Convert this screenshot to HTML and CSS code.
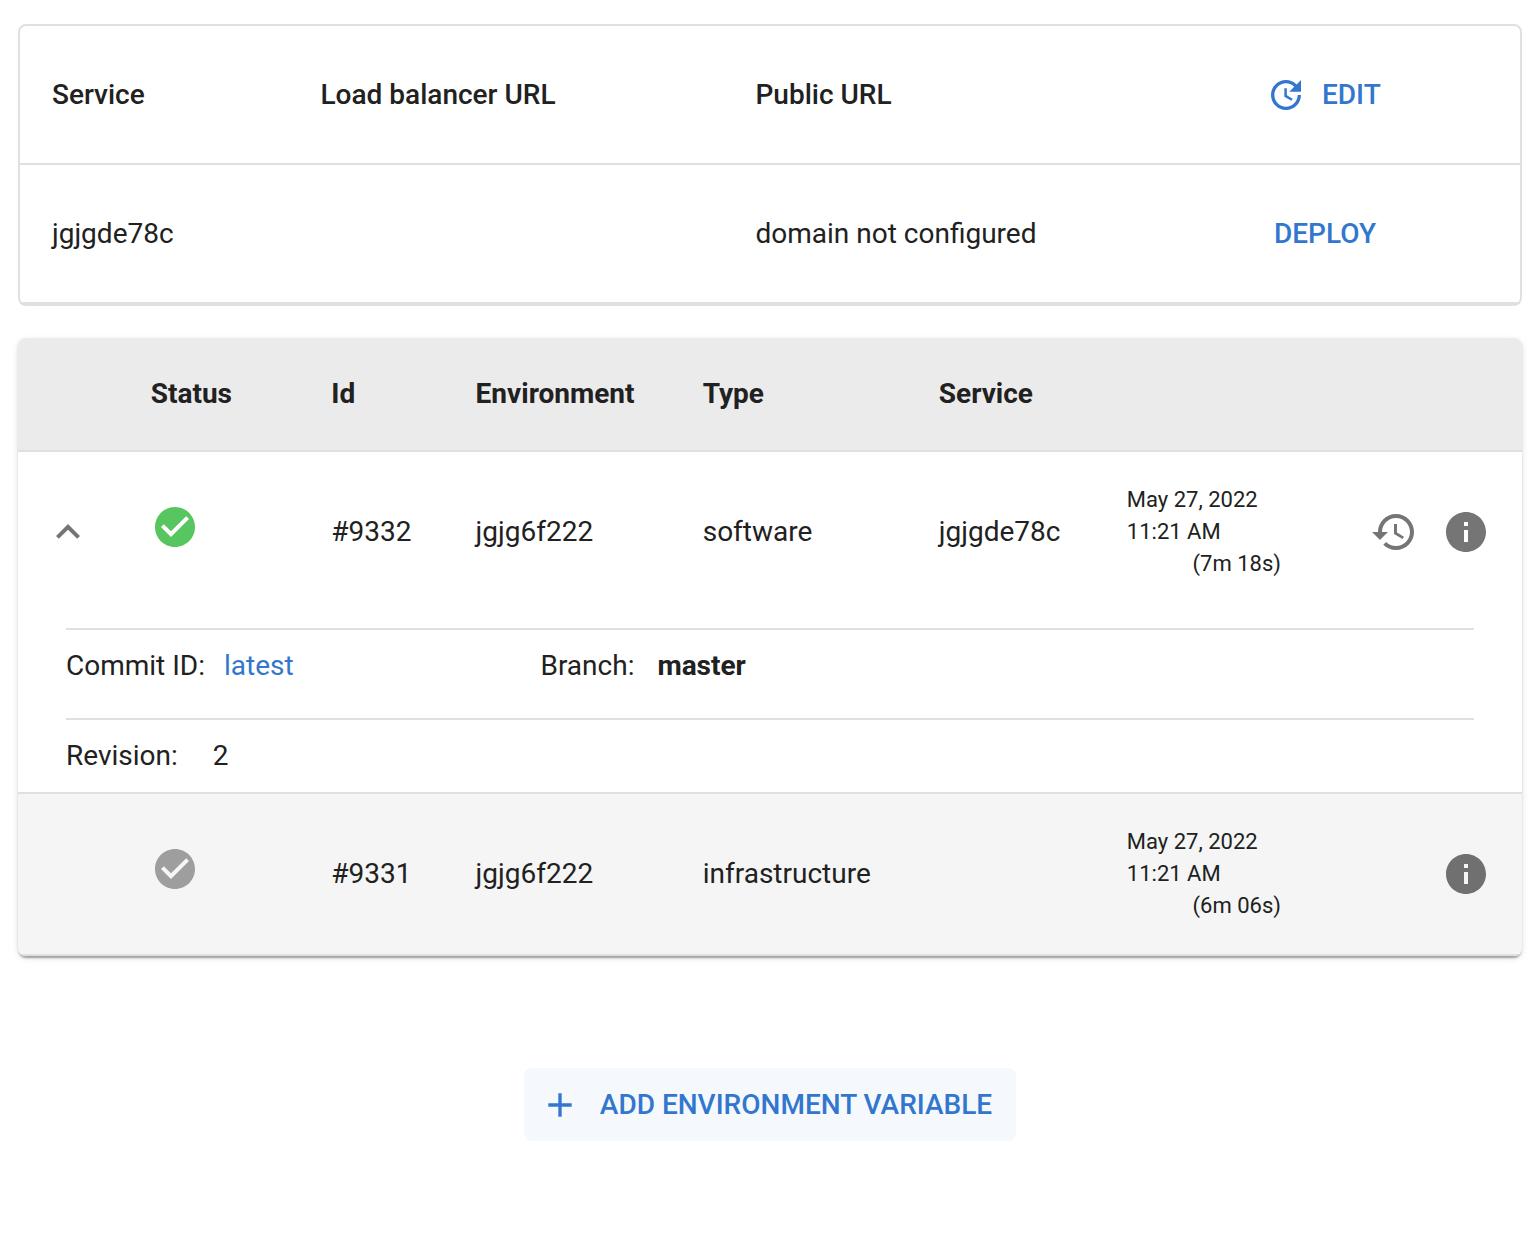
FILE: index.html
```html
<!DOCTYPE html>
<html lang="en">
<head>
    <meta charset="UTF-8">
    <meta name="viewport" content="width=device-width, initial-scale=1.0">
    <title>Services</title>
    <link rel="stylesheet" href="styles.css">
</head>
<body>
    <table class="services">
        <colgroup>
            <col class="col-name">
            <col class="col-balancer">
            <col class="col-public">
            <col>
        </colgroup>
        <thead>
            <tr>
                <th>Service</th>
                <th>Load balancer URL</th>
                <th>Public URL</th>
                <th>
                    <button type="button" class="btn">
                        <svg class="btn-icon" viewBox="0 0 24 24" aria-hidden="true"><path d="M11 8v5l4.25 2.52.77-1.28-3.52-2.09V8zm10 2V3l-2.64 2.64C16.74 4.01 14.49 3 12 3c-4.97 0-9 4.03-9 9s4.03 9 9 9 9-4.03 9-9h-2c0 3.86-3.14 7-7 7s-7-3.14-7-7 3.14-7 7-7c1.93 0 3.68.79 4.95 2.05L14 10h7z"/></svg>
                        EDIT
                    </button>
                </th>
            </tr>
        </thead>
        <tbody>
            <tr>
                <td>jgjgde78c</td>
                <td></td>
                <td>domain not configured</td>
                <td><button type="button" class="btn">DEPLOY</button></td>
            </tr>
        </tbody>
    </table>

    <table class="deployments">
        <colgroup>
            <col class="col-toggle">
            <col class="col-status">
            <col class="col-id">
            <col class="col-env">
            <col class="col-type">
            <col class="col-service">
            <col class="col-date">
            <col>
        </colgroup>
        <thead>
            <tr>
                <th></th>
                <th>Status</th>
                <th>Id</th>
                <th>Environment</th>
                <th>Type</th>
                <th>Service</th>
                <th></th>
                <th></th>
            </tr>
        </thead>
        <tbody>
            <tr class="expanded">
                <td class="toggle">
                    <button type="button" class="icon-btn" aria-label="Collapse" aria-expanded="true">
                        <svg class="icon" viewBox="0 0 24 24"><path d="M7.41 15.41 12 10.83l4.59 4.58L18 14l-6-6-6 6z"/></svg>
                    </button>
                </td>
                <td>
                    <svg class="icon success" viewBox="0 0 24 24" role="img" aria-label="Success"><path d="M12 2C6.48 2 2 6.48 2 12s4.48 10 10 10 10-4.48 10-10S17.52 2 12 2zm-2 15l-5-5 1.41-1.41L10 14.17l7.59-7.59L19 8l-9 9z"/></svg>
                </td>
                <td>#9332</td>
                <td>jgjg6f222</td>
                <td>software</td>
                <td>jgjgde78c</td>
                <td class="date">
                    <div>May 27, 2022</div>
                    <div>11:21 AM</div>
                    <div class="duration">(7m 18s)</div>
                </td>
                <td>
                    <div class="actions">
                        <button type="button" class="icon-btn" aria-label="Roll back">
                            <svg class="icon" viewBox="0 0 24 24"><path d="M13 3c-4.97 0-9 4.03-9 9H1l3.89 3.89.07.14L9 12H6c0-3.87 3.13-7 7-7s7 3.13 7 7-3.13 7-7 7c-1.93 0-3.68-.79-4.94-2.06l-1.42 1.42C8.27 19.99 10.51 21 13 21c4.97 0 9-4.03 9-9s-4.03-9-9-9zm-1 5v5l4.28 2.54.72-1.21-3.5-2.08V8H12z"/></svg>
                        </button>
                        <button type="button" class="icon-btn" aria-label="Details">
                            <svg class="icon" viewBox="0 0 24 24"><path d="M12 2C6.48 2 2 6.48 2 12s4.48 10 10 10 10-4.48 10-10S17.52 2 12 2zm1 15h-2v-6h2v6zm0-8h-2V7h2v2z"/></svg>
                        </button>
                    </div>
                </td>
            </tr>
            <tr>
                <td colspan="8" class="details">
                    <div class="details-row commit">
                        <div>Commit ID: <a href="#" class="commit-link">latest</a></div>
                        <div>Branch: <b class="branch">master</b></div>
                    </div>
                    <div class="details-row">
                        <div>Revision: <span class="revision">2</span></div>
                    </div>
                </td>
            </tr>
            <tr class="alternate">
                <td></td>
                <td>
                    <svg class="icon inactive" viewBox="0 0 24 24" role="img" aria-label="Finished"><path d="M12 2C6.48 2 2 6.48 2 12s4.48 10 10 10 10-4.48 10-10S17.52 2 12 2zm-2 15l-5-5 1.41-1.41L10 14.17l7.59-7.59L19 8l-9 9z"/></svg>
                </td>
                <td>#9331</td>
                <td>jgjg6f222</td>
                <td>infrastructure</td>
                <td></td>
                <td class="date">
                    <div>May 27, 2022</div>
                    <div>11:21 AM</div>
                    <div class="duration">(6m 06s)</div>
                </td>
                <td>
                    <div class="actions">
                        <button type="button" class="icon-btn" aria-label="Details">
                            <svg class="icon" viewBox="0 0 24 24"><path d="M12 2C6.48 2 2 6.48 2 12s4.48 10 10 10 10-4.48 10-10S17.52 2 12 2zm1 15h-2v-6h2v6zm0-8h-2V7h2v2z"/></svg>
                        </button>
                    </div>
                </td>
            </tr>
        </tbody>
    </table>

    <div class="footer">
        <button type="button" class="btn btn-add">
            <svg class="btn-icon" viewBox="0 0 24 24" aria-hidden="true"><path d="M19 13h-6v6h-2v-6H5v-2h6V5h2v6h6v2z"/></svg>
            ADD ENVIRONMENT VARIABLE
        </button>
    </div>
</body>
</html>
```

FILE: styles.css
```css
:root {
    --primary: #3277cd;
    --text: #212121;
    --divider: #e0e0e0;
    --icon: #757575;
    --radius: 8px;
}

* {
    box-sizing: border-box;
}

body {
    margin: 0;
    padding: 24px 16px 24px 18px;
    background: #fff;
    color: var(--text);
    font-family: Roboto, "Liberation Sans", sans-serif;
    font-size: 28px;
    line-height: 40px;
}

table {
    width: 100%;
    table-layout: fixed;
    border-collapse: separate;
    border-spacing: 0;
    border-radius: var(--radius);
}

th, td {
    padding: 32px;
    border-bottom: 2px solid var(--divider);
    text-align: left;
    vertical-align: middle;
}

/* Services */
.services {
    border: 2px solid var(--divider);
    margin-bottom: 32px;
}

.services th {
    font-weight: 500;
}

.services th, .services td {
    height: 139px;
}

.col-name { width: 17.9%; }
.col-balancer { width: 29%; }
.col-public { width: 33.5%; }

/* Buttons */
.btn {
    display: inline-flex;
    align-items: center;
    gap: 16px;
    padding: 12px 16px;
    border: none;
    border-radius: var(--radius);
    background: none;
    color: var(--primary);
    font: inherit;
    font-weight: 500;
    line-height: 49px;
    white-space: nowrap;
    vertical-align: middle;
    cursor: pointer;
}

.btn:hover {
    background: #f5f9fd;
}

.btn-icon {
    width: 40px;
    height: 40px;
    margin-left: -8px;
    fill: currentColor;
}

.icon-btn {
    display: inline-flex;
    padding: 0;
    border: none;
    background: none;
    color: var(--icon);
    vertical-align: middle;
    cursor: pointer;
}

.icon {
    width: 48px;
    height: 48px;
    fill: currentColor;
}

/* Deployments */
.deployments {
    overflow: hidden;
    box-shadow: 0 4px 2px -2px rgba(0, 0, 0, 0.2),
                0 2px 2px 0 rgba(0, 0, 0, 0.14),
                0 2px 6px 0 rgba(0, 0, 0, 0.12);
}

.deployments th {
    height: 114px;
    background: #ebebeb;
    font-weight: 700;
}

.col-toggle { width: 6.7%; }
.col-status { width: 12%; }
.col-id { width: 9.6%; }
.col-env { width: 15.1%; }
.col-type { width: 15.7%; }
.col-service { width: 12.5%; }
.col-date { width: 14.5%; }

.expanded td {
    border-bottom: none;
}

.alternate td {
    background: #f5f5f5;
}

.alternate .icon-btn {
    color: #707070;
}

.toggle {
    padding: 0;
    text-align: center;
}

.success {
    color: #57c560;
}

.inactive {
    color: #9e9e9e;
}

.date {
    font-size: 22px;
    line-height: 32px;
}

.duration {
    text-align: right;
}

.actions {
    display: flex;
    justify-content: flex-end;
    gap: 24px;
}

.details {
    padding: 16px 48px 0;
}

.details-row {
    display: grid;
    grid-template-columns: 33.7% 1fr;
    padding: 16px 0;
    border-top: 2px solid var(--divider);
}

.commit {
    padding-bottom: 32px;
}

.commit-link {
    margin-left: 12px;
    color: var(--primary);
    text-decoration: none;
}

.branch {
    margin-left: 16px;
}

.revision {
    margin-left: 28px;
}

/* Footer */
.footer {
    display: flex;
    justify-content: center;
    padding-top: 112px;
}

.btn-add {
    gap: 20px;
    padding: 12px 24px;
    background: #f5f9fd;
}
```
